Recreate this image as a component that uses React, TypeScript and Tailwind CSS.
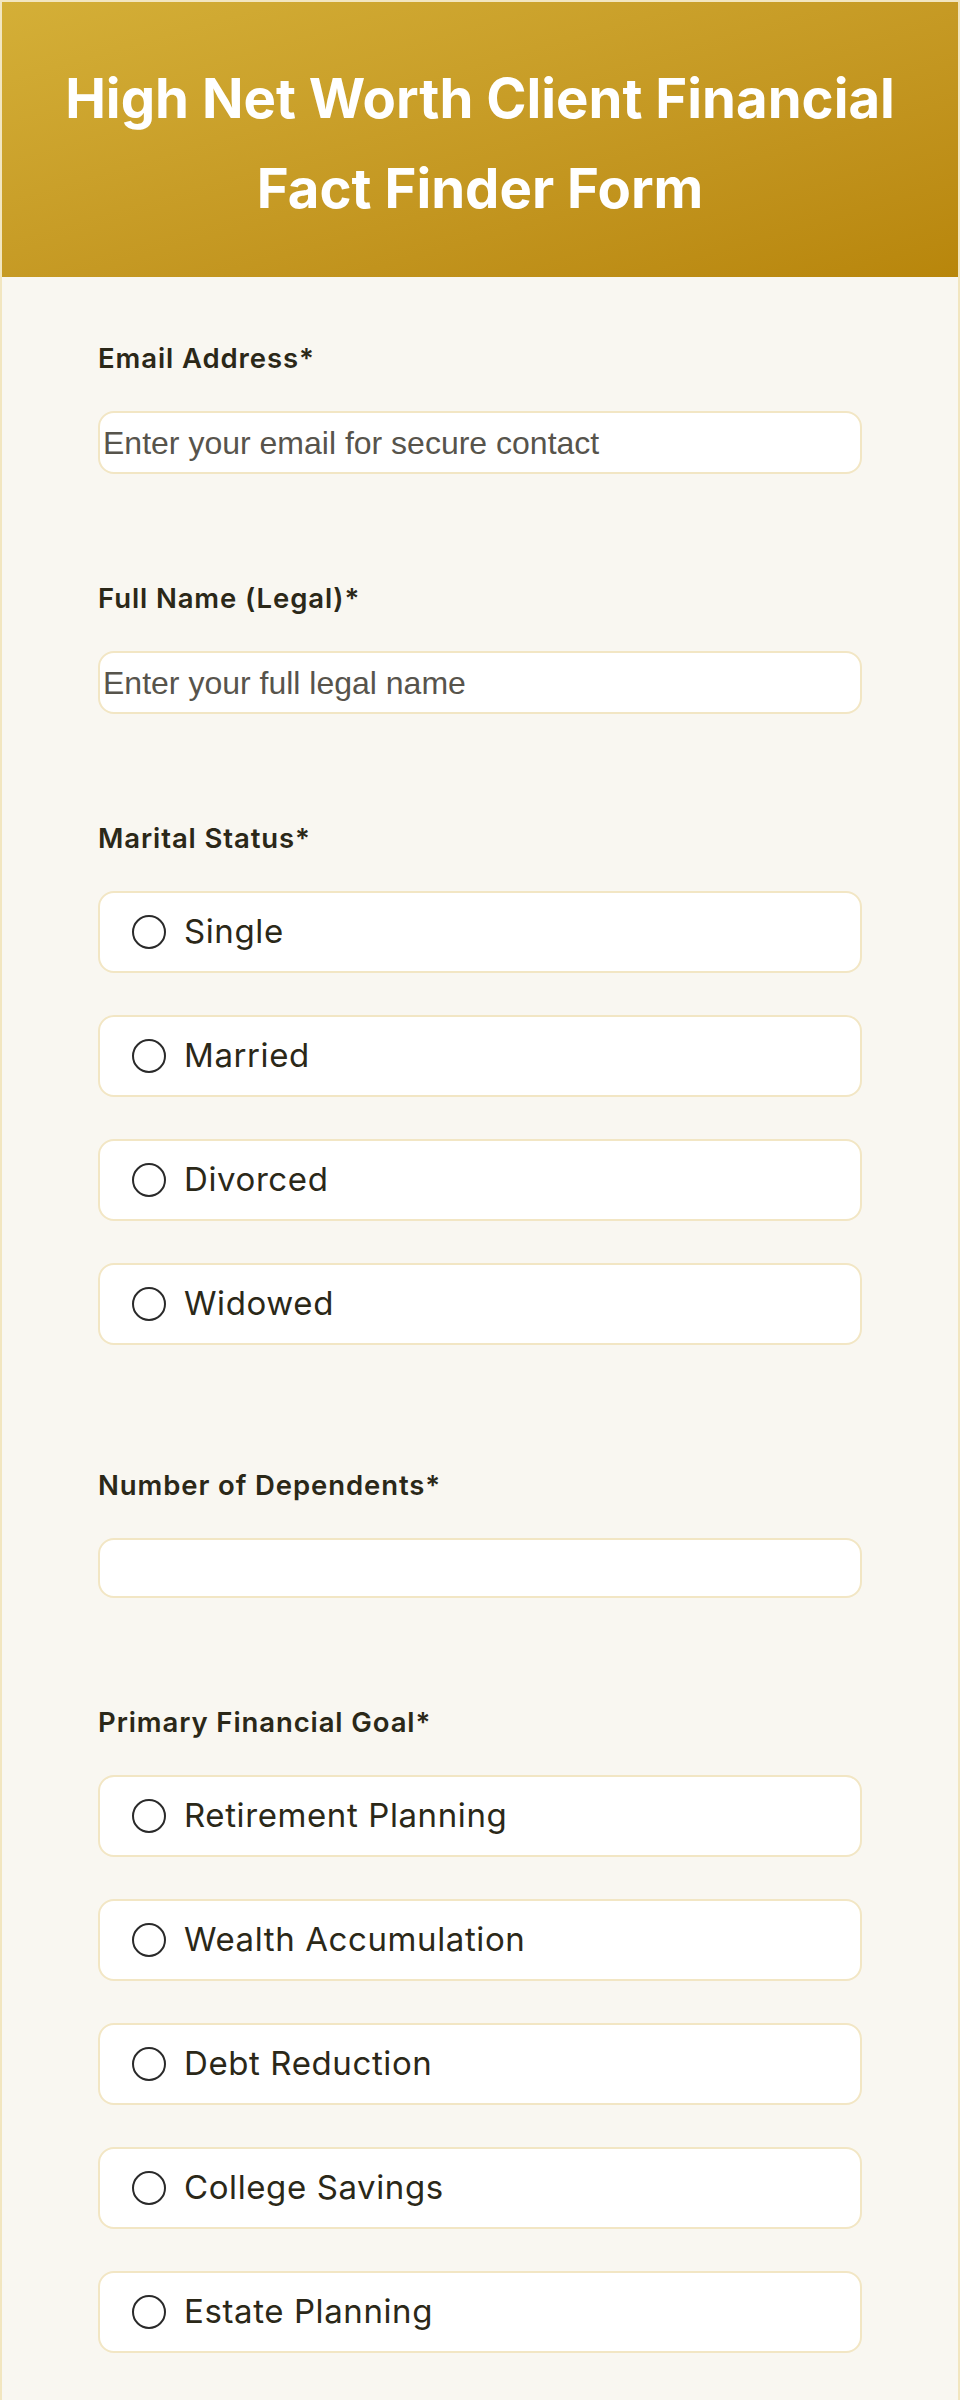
import React from "react";

function Label({ children }: { children: React.ReactNode }) {
  return (
    <div className="text-[27.5px] leading-[40px] font-semibold tracking-[0.9px] text-[#2b2818] mb-[33px]">
      {children}
    </div>
  );
}

function TextField({ placeholder, h }: { placeholder?: string; h: string }) {
  return (
    <div
      className={`${h} w-full rounded-[16px] border-2 border-[#f2e6c4] bg-white flex items-center pl-[3px]`}
    >
      {placeholder ? (
        <span
          className="text-[32px] text-[#57544c]"
          style={{ fontFamily: '"Liberation Sans", Arial, sans-serif' }}
        >
          {placeholder}
        </span>
      ) : null}
    </div>
  );
}

function RadioOption({ label }: { label: string }) {
  return (
    <div className="h-[82px] w-full rounded-[16px] border-2 border-[#f2e6c4] bg-white flex items-center pl-[32px]">
      <span className="w-[34px] h-[34px] rounded-full border-2 border-[#2a2a2a] bg-white shrink-0" />
      <span className="ml-[18px] text-[33px] tracking-[0.6px] text-[#2b2818]">{label}</span>
    </div>
  );
}

export default function App() {
  const marital = ["Single", "Married", "Divorced", "Widowed"];
  const goals = [
    "Retirement Planning",
    "Wealth Accumulation",
    "Debt Reduction",
    "College Savings",
    "Estate Planning",
  ];
  return (
    <div
      className="w-[960px] min-h-[2500px] bg-[#f9f7f1] border-2 border-[#f2e6c0]"
      style={{ fontFamily: 'Inter, "Noto Sans", sans-serif' }}
    >
      <div className="bg-gradient-to-br from-[#d4af37] to-[#b8860b] pt-[51px] pb-[44px]">
        <h1 className="text-white font-bold text-[54.5px] leading-[90px] text-center">
          High Net Worth Client Financial
          <br />
          Fact Finder Form
        </h1>
      </div>
      <div className="px-[96px] pt-[61px]">
        <div className="mb-[104px]">
          <Label>Email Address*</Label>
          <TextField h="h-[63px]" placeholder="Enter your email for secure contact" />
        </div>
        <div className="mb-[104px]">
          <Label>Full Name (Legal)*</Label>
          <TextField h="h-[63px]" placeholder="Enter your full legal name" />
        </div>
        <div className="mb-[120px]">
          <Label>Marital Status*</Label>
          <div className="flex flex-col gap-[42px]">
            {marital.map((m) => (
              <RadioOption key={m} label={m} />
            ))}
          </div>
        </div>
        <div className="mb-[104px]">
          <Label>Number of Dependents*</Label>
          <TextField h="h-[60px]" />
        </div>
        <div>
          <Label>Primary Financial Goal*</Label>
          <div className="flex flex-col gap-[42px]">
            {goals.map((g) => (
              <RadioOption key={g} label={g} />
            ))}
          </div>
        </div>
      </div>
    </div>
  );
}
